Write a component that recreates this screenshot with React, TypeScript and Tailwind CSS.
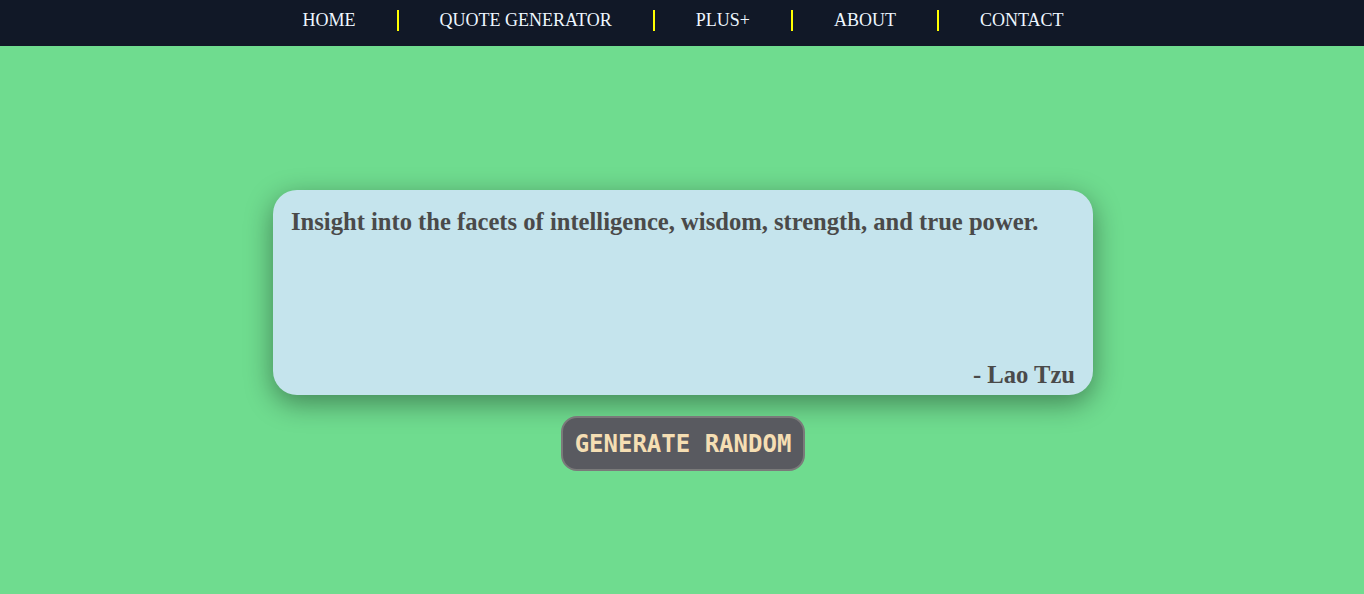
const links = ["HOME", "QUOTE GENERATOR", "PLUS+", "ABOUT", "CONTACT"];

const App = () => {
	return (
		<div className="min-h-[594px] bg-[#6fdc8f] font-['Liberation_Serif',serif]">
			{/* Navbar */}
			<nav className="h-[46px] bg-[#111827] flex items-start justify-center pt-[10px] pl-[2px]">
				{links.map((l, i) => (
					<div key={l} className="flex items-center">
						{i > 0 && <span className="w-[2px] h-[21px] bg-[#ffff00]"></span>}
						<a href="#" className="px-[41px] text-[18px] leading-[21px] text-[#eef6ff]">
							{l}
						</a>
					</div>
				))}
			</nav>
			{/* Quote */}
			<main className="flex flex-col items-center pt-[144px]">
				<div className="ml-[2px] w-[820px] h-[205px] bg-[#c5e4ed] rounded-[24px] p-[18px] flex flex-col justify-between shadow-[0_8px_28px_rgba(0,0,0,0.4)]">
					<p className="text-[24.6px] leading-[28px] font-bold text-[#4a4a4a]">
						Insight into the facets of intelligence, wisdom, strength, and true power.
					</p>
					<p className="text-[24.6px] leading-[28px] font-bold text-[#4a4a4a] text-right -mb-[12px]">
						- Lao Tzu
					</p>
				</div>
				<button
					type="button"
					className="mt-[21px] ml-[2px] w-[244px] h-[55px] bg-[#595a60] border-2 border-[#7a7a7a] rounded-[16px] font-['DejaVu_Sans_Mono',monospace] font-bold text-[24px] text-[#f5deb3]">
					GENERATE RANDOM
				</button>
			</main>
		</div>
	);
};

export default App;
